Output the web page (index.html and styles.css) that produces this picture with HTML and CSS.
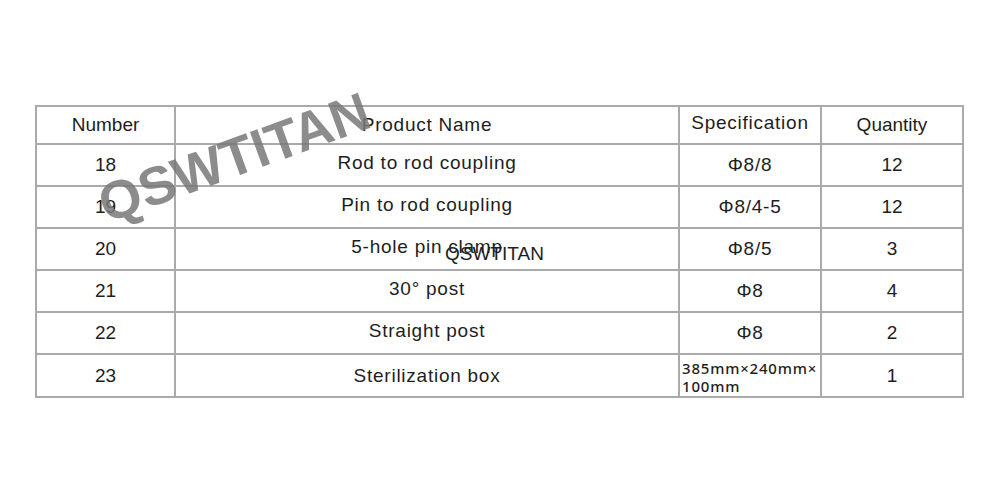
FILE: index.html
```html
<!DOCTYPE html>
<html>
<head>
<meta charset="utf-8">
<link rel="stylesheet" href="styles.css">
</head>
<body>
<div class="page">
  <table class="parts">
    <colgroup>
      <col class="c-num">
      <col class="c-name">
      <col class="c-spec">
      <col class="c-qty">
    </colgroup>
    <tr class="head"><td>Number</td><td class="ls">Product Name</td><td class="ls up">Specification</td><td>Quantity</td></tr>
    <tr><td>18</td><td class="ls up">Rod to rod coupling</td><td class="ls">Φ8/8</td><td>12</td></tr>
    <tr><td>19</td><td class="ls up">Pin to rod coupling</td><td class="ls">Φ8/4-5</td><td>12</td></tr>
    <tr><td>20</td><td class="ls up">5-hole pin clamp</td><td class="ls">Φ8/5</td><td>3</td></tr>
    <tr><td>21</td><td class="ls up">30° post</td><td class="ls">Φ8</td><td>4</td></tr>
    <tr><td>22</td><td class="ls up">Straight post</td><td class="ls">Φ8</td><td>2</td></tr>
    <tr class="last"><td>23</td><td class="ls">Sterilization box</td><td class="spec-small">385mm×240mm×&#8203;100mm</td><td>1</td></tr>
  </table>
  <span class="wm-big">QSWTITAN</span>
  <span class="wm-small">QSWTITAN</span>
</div>
</body>
</html>
```
FILE: styles.css
```css
html, body {
  margin: 0;
  padding: 0;
  background: #fff;
}
.page {
  position: relative;
  width: 1000px;
  height: 488px;
  padding-top: 105px;
  padding-left: 35px;
  box-sizing: border-box;
  font-family: "Liberation Sans", Arial, sans-serif;
  color: #1e1e1e;
}
.parts {
  border-collapse: collapse;
  table-layout: fixed;
  width: 927px;
}
.c-num { width: 139px; }
.c-name { width: 504px; }
.c-spec { width: 142px; }
.c-qty { width: 142px; }
.parts td {
  border: 2px solid #aaa;
  text-align: center;
  vertical-align: middle;
  font-size: 19px;
  height: 42px;
  padding: 0 2px 0;
  box-sizing: border-box;
}
.parts td.ls { letter-spacing: 0.75px; }
.parts td.up { padding-bottom: 4px; }
.parts tr.head td { height: 38px; }
.parts tr.last td { height: 43px; }
.parts td.spec-small {
  text-align: left;
  font-family: "Noto Sans", "Open Sans", sans-serif;
  font-weight: 500;
  font-size: 15px;
  line-height: 18px;
  padding: 2px 0 0 2px;
  letter-spacing: 0.8px;
}
.wm-big {
  position: absolute;
  left: 234px;
  top: 157px;
  transform: translate(-50%, -50%) rotate(-20deg);
  font-family: "Liberation Sans", Arial, sans-serif;
  font-weight: bold;
  font-size: 54px;
  color: rgba(120, 120, 120, 0.85);
  white-space: nowrap;
}
.wm-small {
  position: absolute;
  left: 445px;
  top: 243px;
  font-family: "Liberation Sans", Arial, sans-serif;
  font-size: 19px;
  color: #1e1e1e;
}
```
